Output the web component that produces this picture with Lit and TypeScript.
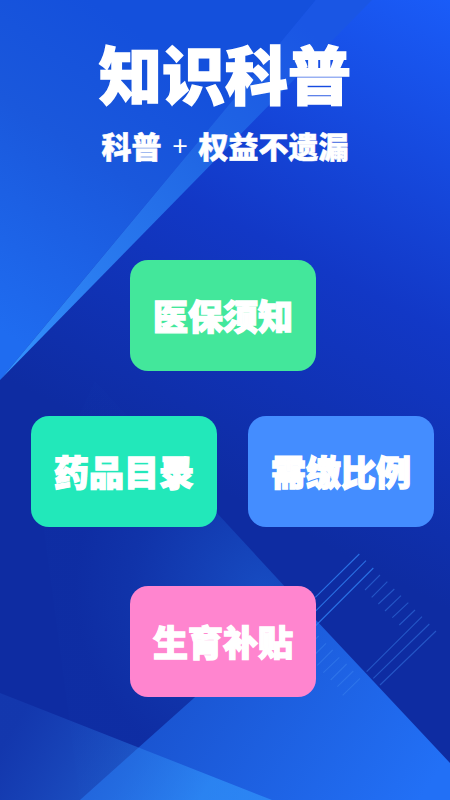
import { LitElement, html, css, svg } from "lit";
import { customElement } from "lit/decorators.js";

const toReal = (l: number[]) => [300 + l[0] / 3, 540 + l[1] / 3, 300 + l[2] / 3, 540 + l[3] / 3];
const bright = [[178,42,46,172],[198,62,46,214],[220,84,46,258]].map(toReal);
const faint = [
  [240,105,195,150],[262,125,215,172],[283,147,235,192],[303,167,255,213],[325,188,277,233],[345,210,298,255],
  [366,230,200,395],[388,252,220,415],[408,273,240,435],
  [56,288,46,298],[78,310,46,342],[98,330,52,376],[118,352,70,398],[140,372,92,420],[160,393,112,440],[180,415,128,466],
].map(toReal);

@customElement("app-root")
export class AppRoot extends LitElement {
  static styles = css`
    :host { display: block; width: 450px; height: 800px; position: relative; overflow: hidden; background: #0f2fa8; font-family: "Noto Sans CJK SC", "Noto Sans", sans-serif; color: #fff; }
    .bg { position: absolute; inset: 0; width: 450px; height: 800px; }
    .page { position: relative; display: flex; flex-direction: column; height: 800px; box-sizing: border-box; padding-top: 27px; }
    h1 { margin: 0; text-align: center; font-size: 63px; line-height: 90px; font-weight: 900; -webkit-text-stroke: 1.5px #fff; white-space: nowrap; }
    h2 { margin: 7px 0 0; font-size: 30px; line-height: 42px; font-weight: 900; -webkit-text-stroke: .5px #fff; white-space: nowrap; display: flex; justify-content: center; align-items: center; }
    .plus { font-weight: 400; -webkit-text-stroke: 0; margin: 0 11px; font-size: 27px; }
    .cards { margin-top: 94px; display: flex; flex-direction: column; }
    .row { display: flex; gap: 31px; padding-left: 31px; }
    .row.mid { margin: 45px 0 59px; }
    .row.solo { padding-left: 130px; }
    .card { width: 186px; height: 111px; border-radius: 18px; display: flex; align-items: center; justify-content: center; font-size: 35px; font-weight: 900; -webkit-text-stroke: 1.4px #fff; white-space: nowrap; padding-bottom: 2px; box-sizing: border-box; }
    .green { background: #43e79b; }
    .teal { background: #22e8ba; }
    .blue { background: #448dff; }
    .pink { background: #ff85cf; }
  `;

  render() {
    return html`
      <svg class="bg" viewBox="0 0 450 800" aria-hidden="true">
        <defs>
          <linearGradient id="base" gradientUnits="userSpaceOnUse" x1="450" y1="0" x2="200" y2="480">
            <stop offset="0" stop-color="#1a5cf8" /><stop offset="0.55" stop-color="#1238c6" /><stop offset="1" stop-color="#0e2ca2" />
          </linearGradient>
          <linearGradient id="tl" gradientUnits="userSpaceOnUse" x1="0" y1="330" x2="180" y2="60">
            <stop offset="0" stop-color="#1f6cf0" /><stop offset="0.6" stop-color="#1a58dc" /><stop offset="1" stop-color="#1450dc" />
          </linearGradient>
          <linearGradient id="band" gradientUnits="userSpaceOnUse" x1="0" y1="380" x2="320" y2="40">
            <stop offset="0" stop-color="#3494ff" /><stop offset="0.3" stop-color="#2a7cf0" /><stop offset="0.65" stop-color="#2066e4" /><stop offset="1" stop-color="#1a56e4" />
          </linearGradient>
          <radialGradient id="fade" gradientUnits="userSpaceOnUse" cx="265" cy="590" r="190">
            <stop offset="0" stop-color="#174cc2" stop-opacity="1" /><stop offset="0.7" stop-color="#174ac0" stop-opacity="0.25" /><stop offset="1" stop-color="#174ac0" stop-opacity="0.04" />
          </radialGradient>
          <linearGradient id="tri" gradientUnits="userSpaceOnUse" x1="200" y1="660" x2="420" y2="800">
            <stop offset="0" stop-color="#1a55d2" /><stop offset="1" stop-color="#2270f6" />
          </linearGradient>
          <linearGradient id="low" gradientUnits="userSpaceOnUse" x1="30" y1="700" x2="200" y2="800">
            <stop offset="0" stop-color="#2a6ae0" stop-opacity="0.18" /><stop offset="1" stop-color="#349cff" stop-opacity="0.6" />
          </linearGradient>
        </defs>
        <rect width="450" height="800" fill="url(#base)" />
        <polygon points="0,0 316,0 0,380" fill="url(#tl)" />
        <polygon points="0,380 316,0 372,0" fill="url(#band)" />
        <polygon points="95,381 300,603 80,800 40,500" fill="url(#fade)" />
        <polygon points="300,603 450,763 450,800 80,800" fill="url(#tri)" />
        <polygon points="0,693 272,800 0,800" fill="url(#low)" />
        ${bright.map((l) => svg`<line x1=${l[0]} y1=${l[1]} x2=${l[2]} y2=${l[3]} stroke="#2f7cf0" stroke-width="1.1" opacity="0.85" />`)}
        ${faint.map((l) => svg`<line x1=${l[0]} y1=${l[1]} x2=${l[2]} y2=${l[3]} stroke="#3f88f2" stroke-width="1.1" opacity="0.45" />`)}
      </svg>
      <div class="page">
        <h1>知识科普</h1>
        <h2>科普<span class="plus">+</span>权益不遗漏</h2>
        <div class="cards">
          <div class="row solo"><div class="card green">医保须知</div></div>
          <div class="row mid">
            <div class="card teal">药品目录</div>
            <div class="card blue">需缴比例</div>
          </div>
          <div class="row solo"><div class="card pink">生育补贴</div></div>
        </div>
      </div>
    `;
  }
}
